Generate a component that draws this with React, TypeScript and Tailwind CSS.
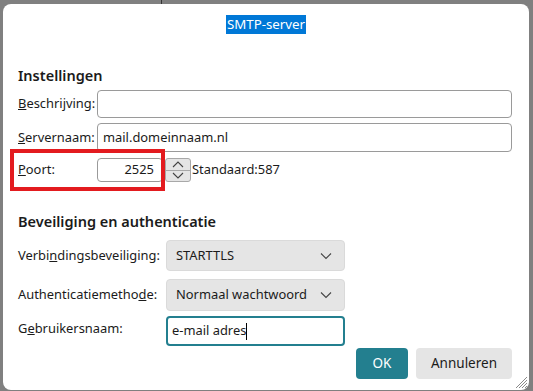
const font = { fontFamily: '"Noto Sans", "Open Sans", sans-serif' };

function Chevron() {
  return (
    <svg width="12" height="8" viewBox="0 0 12 8" className="shrink-0">
      <path d="M1 1.5 L6 6.5 L11 1.5" fill="none" stroke="#444" strokeWidth="1.1" />
    </svg>
  );
}

function Select({ value }: { value: string }) {
  return (
    <div className="flex items-center justify-between w-[179px] h-full rounded-[4px] bg-[#e5e5e5] border border-[#dadada] pl-[9px] pr-[12px] text-[12.9px] text-[#1b1b1b]">
      <span>{value}</span>
      <Chevron />
    </div>
  );
}

export default function App() {
  return (
    <div className="relative w-[533px] h-[391px] overflow-hidden bg-[#808080] pt-[4px] pl-[3px]" style={font}>
      <div className="absolute left-[161px] top-0 w-px h-[4px] bg-[#333]" />
      <div className="relative w-[526px] h-[386px] bg-white rounded-[8px] text-[#1b1b1b]">
        {/* title */}
        <div className="flex justify-center pt-[11px]">
          <span className="bg-[#0078d7] text-white text-[13.3px] leading-[19px] h-[19px] px-[1px]">SMTP-server</span>
        </div>

        <div className="pl-[15px] pt-[31px] text-[14.5px] font-semibold leading-[20px]">Instellingen</div>

        <div className="flex items-center mt-[5px] h-[28px]">
          <div className="w-[94px] pl-[15px] text-[12.9px]"><span className="underline">B</span>eschrijving:</div>
          <div className="w-[415px] h-full rounded-[4px] border border-[#9a9a9a]" />
        </div>

        <div className="flex items-center mt-[5px] h-[29px]">
          <div className="w-[94px] pl-[15px] text-[12.9px]"><span className="underline">S</span>ervernaam:</div>
          <div className="w-[415px] h-full rounded-[4px] border border-[#9a9a9a] flex items-center pl-[5px] text-[12.9px]">mail.domeinnaam.nl</div>
        </div>

        <div className="flex items-center mt-[6px] h-[24px]">
          <div className="w-[94px] pl-[15px] text-[12.9px]"><span className="underline">P</span>oort:</div>
          <div className="w-[66px] h-full rounded-[4px] border border-[#9a9a9a] flex items-center justify-end pr-[8px] text-[12.9px]">2525</div>
          <div className="ml-[2px] w-[26px] h-full flex flex-col rounded-[3px] border border-[#a8a8a8] bg-[#e5e5e5] overflow-hidden">
            <div className="flex-1 flex items-center justify-center border-b border-[#a8a8a8]">
              <svg width="12" height="7" viewBox="0 0 12 7"><path d="M1 6 L6 1 L11 6" fill="none" stroke="#444" strokeWidth="1.1" /></svg>
            </div>
            <div className="flex-1 flex items-center justify-center">
              <svg width="12" height="7" viewBox="0 0 12 7"><path d="M1 1 L6 6 L11 1" fill="none" stroke="#444" strokeWidth="1.1" /></svg>
            </div>
          </div>
          <div className="ml-[1px] text-[12.9px]">Standaard:587</div>
        </div>

        {/* red highlight box */}
        <div className="absolute left-[7px] top-[145px] w-[155px] h-[42px] border-[4px] border-[#e31b1f]" />

        <div className="pl-[15px] pt-[29px] text-[14.5px] font-semibold leading-[20px]">Beveiliging en authenticatie</div>

        <div className="flex items-center mt-[9px] h-[31px]">
          <div className="w-[163px] pl-[15px] text-[12.9px]">Verbi<span className="underline">n</span>dingsbeveiliging:</div>
          <Select value="STARTTLS" />
        </div>

        <div className="flex items-center mt-[8px] h-[32px]">
          <div className="w-[163px] pl-[15px] text-[12.9px]">Authenticatiemetho<span className="underline">d</span>e:</div>
          <Select value="Normaal wachtwoord" />
        </div>

        <div className="flex items-center mt-[5px] h-[30px]">
          <div className="w-[163px] pl-[15px] text-[12.9px] self-start pt-[3px]">G<span className="underline">e</span>bruikersnaam:</div>
          <div className="w-[179px] h-full rounded-[4px] border-[2px] border-[#237f8f] flex items-center pl-[4px] text-[12.9px]">
            e-mail adres<span className="inline-block w-px h-[17px] bg-black" />
          </div>
        </div>

        <div className="flex justify-end gap-[8px] pr-[17px] mt-[2px]">
          <div className="w-[52px] h-[31px] rounded-[4px] bg-[#237f8f] text-white flex items-center justify-center text-[13.5px]">OK</div>
          <div className="w-[96px] h-[31px] rounded-[4px] bg-[#e5e5e5] flex items-center justify-center text-[13.5px]">Annuleren</div>
        </div>

        {/* resize grip */}
        <svg className="absolute right-[1px] bottom-[1px]" width="12" height="12" viewBox="0 0 12 12">
          <path d="M11 3 L3 11 M11 6 L6 11 M11 9 L9 11 M11 0 L0 11" stroke="#8a8a8a" strokeWidth="1" />
        </svg>
      </div>
    </div>
  );
}
